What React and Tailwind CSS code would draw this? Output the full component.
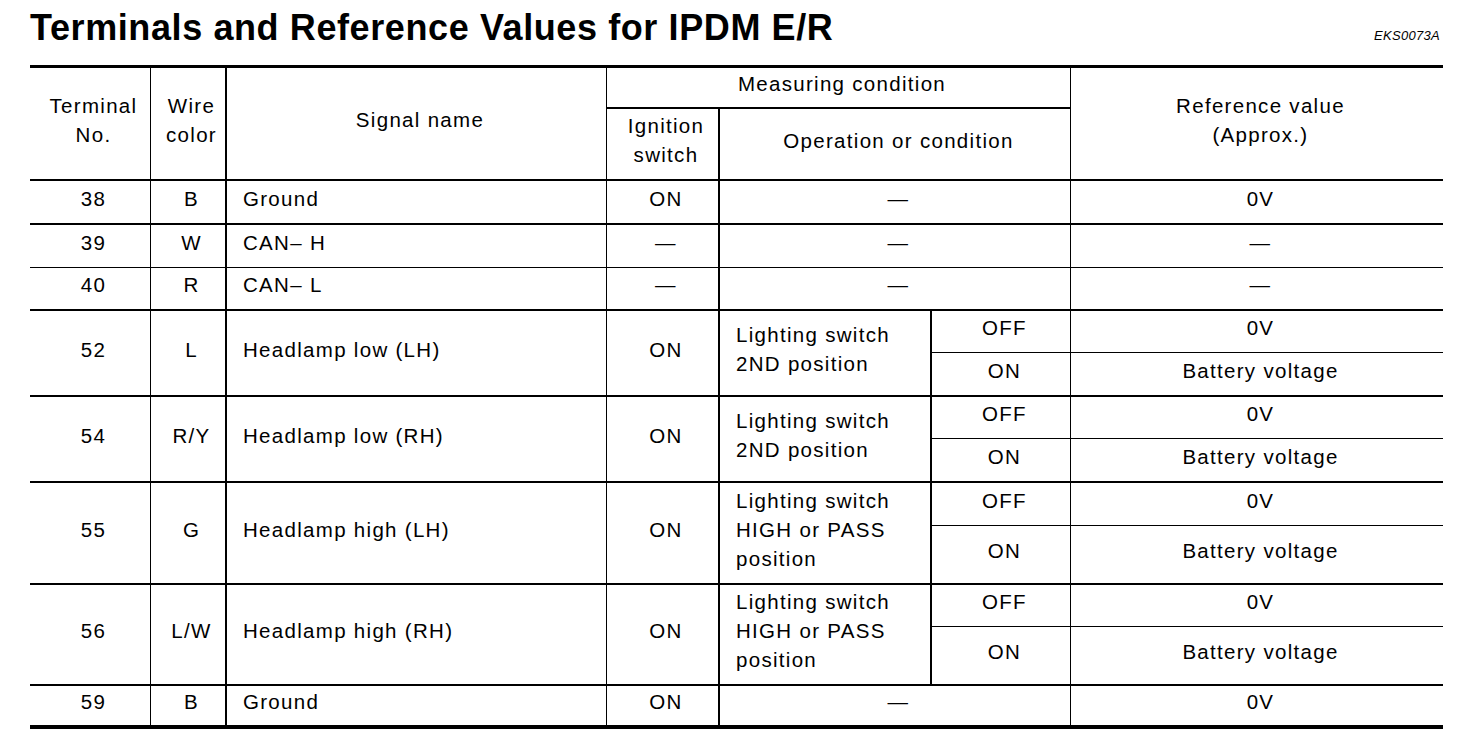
const C = "flex items-center justify-center text-center pl-[7px] pb-[8px]"
const L = "flex items-center justify-start pl-[16px] pb-[8px]"

const simpleTop = [
  { t: "38", w: "B", s: "Ground", ign: "ON", op: "—", ref: "0V", b: "border-b-2" },
  { t: "39", w: "W", s: "CAN– H", ign: "—", op: "—", ref: "—", b: "border-b" },
  { t: "40", w: "R", s: "CAN– L", ign: "—", op: "—", ref: "—", b: "border-b-2" },
]

const groups = [
  { t: "52", w: "L", s: "Headlamp low (LH)", op: ["Lighting switch", "2ND position"] },
  { t: "54", w: "R/Y", s: "Headlamp low (RH)", op: ["Lighting switch", "2ND position"] },
  { t: "55", w: "G", s: "Headlamp high (LH)", op: ["Lighting switch", "HIGH or PASS", "position"] },
  { t: "56", w: "L/W", s: "Headlamp high (RH)", op: ["Lighting switch", "HIGH or PASS", "position"] },
]

function SimpleRow({ t, w, s, ign, op, refv, b }) {
  return (
    <>
      <div className={`${C} border-r ${b}`}>{t}</div>
      <div className={`${C} border-r-2 ${b}`}>{w}</div>
      <div className={`${L} border-r ${b}`}>{s}</div>
      <div className={`${C} border-r-2 ${b}`}>{ign}</div>
      <div className={`${C} col-span-2 border-r ${b}`}>{op}</div>
      <div className={`${C} ${b}`}>{refv}</div>
    </>
  )
}

function GroupRow({ t, w, s, op }) {
  return (
    <>
      <div className={`${C} row-span-2 border-r border-b-2`}>{t}</div>
      <div className={`${C} row-span-2 border-r-2 border-b-2`}>{w}</div>
      <div className={`${L} row-span-2 border-r border-b-2`}>{s}</div>
      <div className={`${C} row-span-2 border-r-2 border-b-2`}>ON</div>
      <div className="row-span-2 flex flex-col justify-center pl-[16px] pb-[8px] border-r-2 border-b-2">
        {op.map((line) => (
          <span key={line}>{line}</span>
        ))}
      </div>
      <div className={`${C} border-r border-b`}>OFF</div>
      <div className={`${C} border-b`}>0V</div>
      <div className={`${C} border-r border-b-2`}>ON</div>
      <div className={`${C} border-b-2`}>Battery voltage</div>
    </>
  )
}

export default function App() {
  return (
    <div className="w-[1472px] h-[738px] overflow-hidden bg-white text-black font-['Liberation_Sans',Arial,sans-serif] pt-[8px] pl-[30px]">
      <div className="flex items-baseline justify-between w-[1413px]">
        <h1 className="text-[36px] leading-[40px] font-bold tracking-[0.6px]">
          Terminals and Reference Values for IPDM E/R
        </h1>
        <span className="italic text-[13px] tracking-[0.3px] mr-[3px]">EKS0073A</span>
      </div>

      <div className="mt-[17px] w-[1413px] grid grid-cols-[121px_76px_380px_113px_212px_139px_372px] grid-rows-[41px_72px_44px_43px_43px_42px_44px_42px_44px_43px_59px_42px_59px_39px] border-t-[3px] border-b-[4px] border-black text-[20.5px] leading-[29px] tracking-[1.3px]">
        {/* header */}
        <div className={`${C} row-span-2 border-r border-b-2`}>
          <div>Terminal<br />No.</div>
        </div>
        <div className={`${C} row-span-2 border-r-2 border-b-2`}>
          <div>Wire<br />color</div>
        </div>
        <div className={`${C} row-span-2 border-r border-b-2`}>Signal name</div>
        <div className={`${C} col-span-3 border-r border-b-2`}>Measuring condition</div>
        <div className={`${C} row-span-2 border-b-2`}>
          <div>Reference value<br />(Approx.)</div>
        </div>
        <div className={`${C} border-r-2 border-b-2`}>
          <div>Ignition<br />switch</div>
        </div>
        <div className={`${C} col-span-2 border-r border-b-2`}>Operation or condition</div>

        {simpleTop.map((r) => (
          <SimpleRow key={r.t} t={r.t} w={r.w} s={r.s} ign={r.ign} op={r.op} refv={r.ref} b={r.b} />
        ))}

        {groups.map((g) => (
          <GroupRow key={g.t} {...g} />
        ))}

        <SimpleRow t="59" w="B" s="Ground" ign="ON" op="—" refv="0V" b="" />
      </div>
    </div>
  )
}
